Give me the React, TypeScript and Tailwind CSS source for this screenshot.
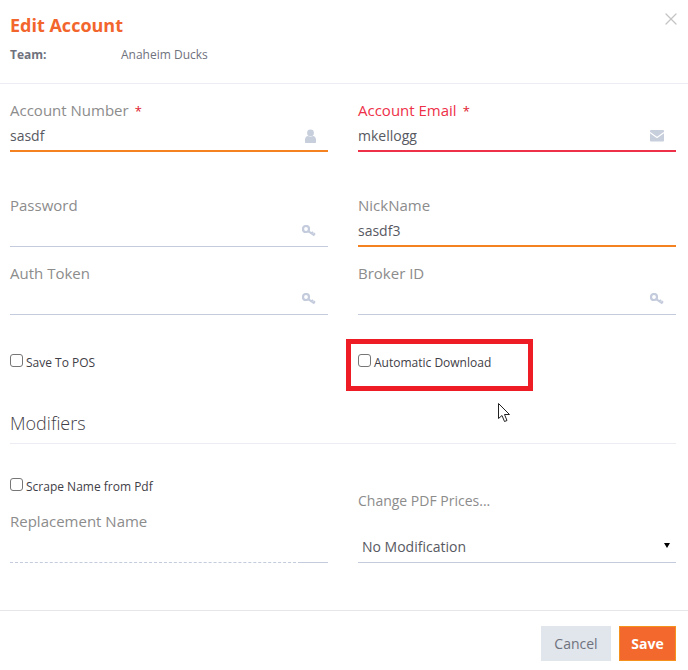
import { X } from "lucide-react";
import type { ReactNode } from "react";

function Field({
  label,
  value,
  icon,
  required,
  tone = "plain",
  dashed,
}: {
  label: string;
  value?: string;
  icon?: ReactNode;
  required?: boolean;
  tone?: "plain" | "focus" | "error";
  dashed?: boolean;
}) {
  const line =
    tone === "focus"
      ? "border-b-2 border-[#f58220]"
      : tone === "error"
        ? "border-b-2 border-[#ee3048]"
        : "border-b border-[#c3cbdc]";
  return (
    <div className="h-[51px]">
      <div className={`h-[20px] text-[15px] leading-[19px] ${tone === "error" ? "text-[#ee3048]" : "text-[#8c8c8c]"}`}>
        {label}
        {required && <span className="ml-[6px] text-[13px] text-[#e0202f]">*</span>}
      </div>
      {dashed ? (
        <div className="mt-[30px] flex h-px">
          <div className="flex-1 border-b border-dashed border-[#c3cbdc]" />
          <div className="w-[27px] bg-[#c3cbdc]" />
        </div>
      ) : (
        <div className={`flex h-[31px] items-center justify-between pr-[12px] ${line}`}>
          <span className="text-[14px] text-[#575962]">{value}</span>
          {icon}
        </div>
      )}
    </div>
  );
}

function Check({ label }: { label: string }) {
  return (
    <label className="flex items-start gap-[3px] text-[12px] leading-[16px] text-[#3f4047]">
      <span className="mt-px h-[13px] w-[13px] rounded-[3px] border border-[#767676] bg-white" />
      <span className="pt-[2px]">{label}</span>
    </label>
  );
}

function KeyIcon() {
  return (
    <svg width="14" height="12" viewBox="0 0 14 12" fill="none" stroke="#c3cbdc">
      <circle cx="4" cy="4" r="3" strokeWidth="2.2" />
      <path d="M6.2 6.2L12.5 10.5M9.5 8.5L11 6.8M11.5 9.8L13 8.3" strokeWidth="2" />
    </svg>
  );
}

function UserIcon() {
  return (
    <svg width="11" height="14" viewBox="0 0 11 14" fill="#c7cedc">
      <circle cx="5.5" cy="4" r="3.4" />
      <path d="M0 13V10.5C0 8.5 1.5 7.2 3 7L5.5 8L8 7C9.5 7.2 11 8.5 11 10.5V13C11 13.6 10.6 14 10 14H1C0.4 14 0 13.6 0 13Z" />
    </svg>
  );
}

function EnvelopeIcon() {
  return (
    <svg width="14" height="12" viewBox="0 0 14 12">
      <rect width="14" height="11.5" rx="1" fill="#c7cedc" />
      <path d="M0 2.5L7 7.5L14 2.5" fill="none" stroke="white" strokeWidth="1.1" />
    </svg>
  );
}

export default function App() {
  return (
    <div className="relative h-[670px] w-[688px] overflow-hidden bg-white font-['Open_Sans',sans-serif]">
      <div className="relative h-[84px] border-b border-[#ebedf2] px-[10px] pt-[12px]">
        <h1 className="text-[18px] leading-[26px] font-bold text-[#f2652d]">Edit Account</h1>
        <div className="mt-[8px] flex text-[12px] leading-[18px] text-[#6f727d]">
          <span className="w-[111px] font-bold">Team:</span>
          <span>Anaheim Ducks</span>
        </div>
        <X className="absolute top-[9px] right-[7px] h-[20px] w-[20px] text-[#c4c4c4]" strokeWidth={1.5} />
      </div>

      <div className="pr-[12px] pl-[10px]">
        <div className="grid grid-cols-2 gap-x-[30px] pt-[17px]">
          <Field label="Account Number" value="sasdf" required tone="focus" icon={<UserIcon />} />
          <Field label="Account Email" value="mkellogg" required tone="error" icon={<EnvelopeIcon />} />
        </div>
        <div className="mt-[44px] grid grid-cols-2 gap-x-[30px] gap-y-[17px]">
          <Field label="Password" icon={<KeyIcon />} />
          <Field label="NickName" value="sasdf3" tone="focus" />
          <Field label="Auth Token" icon={<KeyIcon />} />
          <Field label="Broker ID" icon={<KeyIcon />} />
        </div>
        <div className="mt-[38px] grid grid-cols-2 gap-x-[30px]">
          <Check label="Save To POS" />
          <Check label="Automatic Download" />
        </div>
        <h2 className="mt-[40px] border-b border-[#ebedf2] pb-[7px] text-[18px] leading-[25px] font-light text-[#3f4047]">
          Modifiers
        </h2>
        <div className="mt-[33px] grid grid-cols-2 gap-x-[30px]">
          <div>
            <Check label="Scrape Name from Pdf" />
            <div className="mt-[17px]">
              <Field label="Replacement Name" dashed />
            </div>
          </div>
          <div className="pt-[14px]">
            <div className="text-[14px] leading-[20px] text-[#8c8c8c]">Change PDF Prices...</div>
            <div className="mt-[21px] flex h-[31px] items-center justify-between border-b border-[#c3cbdc] pr-[6px] pl-[4px] text-[14px] text-[#575962]">
              <span className="pb-px">No Modification</span>
              <span className="mb-[4px] h-0 w-0 border-x-[3px] border-t-[5px] border-x-transparent border-t-black" />
            </div>
          </div>
        </div>
      </div>

      <div className="absolute inset-x-0 top-[610px] flex justify-end gap-[8px] border-t border-[#e4e6ea] pt-[15px] pr-[12px]">
        <button className="h-[35px] w-[70px] bg-[#e1e5ec] text-[14px] text-[#6f727d]">Cancel</button>
        <button className="h-[35px] w-[57px] border border-[#f5921e] bg-[#f2682d] text-[14px] font-bold text-white">Save</button>
      </div>

      <div className="absolute top-[339px] left-[346px] h-[52px] w-[187px] border-[5px] border-[#ee1c25]" />
      <svg className="absolute top-[402px] left-[497px]" width="15" height="21" viewBox="0 0 15 21">
        <path d="M1.5 1.5V16.5L5 13.5L7.5 19.5L10 18.5L7.5 12.5H12.5Z" fill="white" stroke="#222" strokeWidth="1" />
      </svg>
    </div>
  );
}
